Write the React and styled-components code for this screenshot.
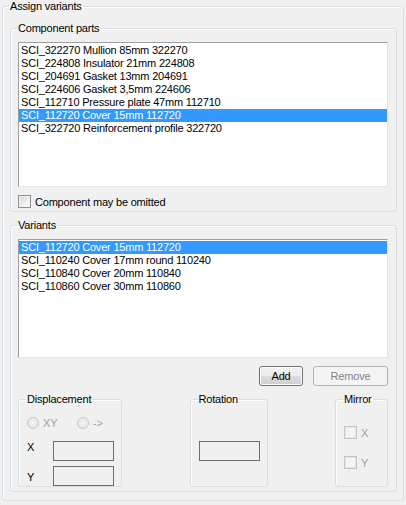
import React from "react";
import styled, { createGlobalStyle } from "styled-components";

const GlobalStyle = createGlobalStyle`
    html, body {
        margin: 0;
        padding: 0;
        background: #f0f0f0;
    }
    body {
        font-family: "Liberation Sans", Arial, sans-serif;
        font-size: 11px;
        letter-spacing: -0.2px;
        color: #000;
    }
`;

const Page = styled.div`
    width: 406px;
    height: 505px;
    background: #f0f0f0;
    padding: 0 2px;
    box-sizing: border-box;
`;

const Group = styled.fieldset`
    margin: 0;
    min-width: 0;
    border: 1px solid #d5dfe5;
    border-radius: 3px;
    box-shadow: inset 1px 1px 0 #fff;
    padding: ${props => props.pad || '7px'};
    box-sizing: border-box;
`;

const Legend = styled.legend`
    padding: 0 1px;
    line-height: 13px;
    font-size: 11px;
    margin-left: -1px;
`;

const Section = styled(Group)`
    margin-top: ${props => props.top || '0'};
`;

const ListBox = styled.div`
    height: ${props => props.h}px;
    background: #fff;
    border: 1px solid;
    border-color: #a0a0a0 #dfe3e8 #e3e9ef #a0a0a0;
    box-sizing: border-box;
    padding-top: 1px;
    overflow: hidden;
`;

const ListItem = styled.div`
    height: 13px;
    line-height: 13px;
    padding-left: 2px;
    white-space: nowrap;
    background: ${props => props.selected ? '#3399ff' : 'transparent'};
    color: ${props => props.selected ? '#fff' : '#000'};
`;

const CheckRow = styled.label`
    display: flex;
    align-items: center;
    gap: 4px;
    height: 13px;
    margin-top: ${props => props.top || '0'};
    color: ${props => props.disabled ? '#a0a0a0' : '#000'};
`;

const CheckBox = styled.span`
    width: 13px;
    height: 13px;
    box-sizing: border-box;
    border: 1px solid ${props => props.disabled ? '#c5c5c5' : '#8e8f8f'};
    background: ${props => props.disabled
        ? '#f4f4f4'
        : 'linear-gradient(135deg, #d8d8d8 0%, #f6f6f6 80%, #fff 100%)'};
    box-shadow: inset 0 0 0 1px ${props => props.disabled ? '#e6e6e6' : '#f4f4f4'};
    flex: none;
`;

const ButtonRow = styled.div`
    display: flex;
    justify-content: flex-end;
    gap: 10px;
    margin-top: 8px;
`;

const Button = styled.button`
    width: ${props => props.w}px;
    height: 20px;
    padding: 0;
    font-family: "Liberation Sans", Arial, sans-serif;
    font-size: 11px;
    letter-spacing: -0.2px;
    border-radius: 3px;
    border: 1px solid ${props => props.disabled ? '#adb2b5' : '#707070'};
    background: ${props => props.disabled
        ? '#f4f4f4'
        : 'linear-gradient(#f2f2f2 0%, #ebebeb 50%, #dddddd 50%, #cfcfcf 100%)'};
    color: ${props => props.disabled ? '#838383' : '#000'};
    box-shadow: ${props => props.disabled ? 'none' : 'inset 0 0 0 1px #fcfcfc'};
`;

const BottomRow = styled.div`
    display: flex;
    justify-content: space-between;
    margin-top: 7px;
`;

const SmallGroup = styled(Group)`
    width: ${props => props.w}px;
    height: 94px;
    padding: 0 7px 0 8px;
    display: flex;
    flex-direction: column;
`;

const RadioRow = styled.div`
    display: flex;
    align-items: center;
    height: 12px;
    margin-top: 11px;
`;

const Radio = styled.span`
    width: 12px;
    height: 12px;
    border-radius: 50%;
    box-sizing: border-box;
    border: 1px solid #c8c8c8;
    background: radial-gradient(circle at 50% 50%, #f6f6f6 0%, #e6e6e6 70%, #dcdcdc 100%);
    flex: none;
`;

const RadioLabel = styled.span`
    color: #a0a0a0;
    margin-left: 4px;
    width: ${props => props.w || 'auto'};
`;

const FieldRow = styled.div`
    display: flex;
    justify-content: space-between;
    align-items: ${props => props.align || 'center'};
    margin-top: ${props => props.top};
`;

const FieldLabel = styled.span`
    line-height: 11px;
    margin-top: ${props => props.offset || '0'};
`;

const TextBox = styled.div`
    width: 61px;
    height: 20px;
    box-sizing: border-box;
    border: 1px solid #6d6d6d;
    background: #f0f0f0;
    margin-top: ${props => props.top || '0'};
`;

const parts = [
    "SCI_322270 Mullion 85mm 322270",
    "SCI_224808 Insulator 21mm 224808",
    "SCI_204691 Gasket 13mm 204691",
    "SCI_224606 Gasket 3,5mm 224606",
    "SCI_112710 Pressure plate 47mm 112710",
    "SCI_112720 Cover 15mm 112720",
    "SCI_322720 Reinforcement profile 322720",
];

const variants = [
    "SCI_112720 Cover 15mm 112720",
    "SCI_110240 Cover 17mm round 110240",
    "SCI_110840 Cover 20mm 110840",
    "SCI_110860 Cover 30mm 110860",
];

export default function App() {
    return (
        <Page>
            <GlobalStyle />
            <Group pad="9px 6px 8px 7px">
                <Legend>Assign variants</Legend>

                <Section pad="7px 8px 3px 7px">
                    <Legend>Component parts</Legend>
                    <ListBox h={145}>
                        {parts.map((p, i) => (
                            <ListItem key={i} selected={i === 5}>{p}</ListItem>
                        ))}
                    </ListBox>
                    <CheckRow top="8px">
                        <CheckBox />
                        Component may be omitted
                    </CheckRow>
                </Section>

                <Section top="7px" pad="7px 8px 4px 7px">
                    <Legend>Variants</Legend>
                    <ListBox h={119}>
                        {variants.map((v, i) => (
                            <ListItem key={i} selected={i === 0}>{v}</ListItem>
                        ))}
                    </ListBox>
                    <ButtonRow>
                        <Button w={44}>Add</Button>
                        <Button w={75} disabled>Remove</Button>
                    </ButtonRow>

                    <BottomRow>
                        <SmallGroup w={104}>
                            <Legend>Displacement</Legend>
                            <RadioRow>
                                <Radio />
                                <RadioLabel w="34px">XY</RadioLabel>
                                <Radio />
                                <RadioLabel>-&gt;</RadioLabel>
                            </RadioRow>
                            <FieldRow top="12px" align="flex-start">
                                <FieldLabel offset="1px">X</FieldLabel>
                                <TextBox />
                            </FieldRow>
                            <FieldRow top="5px" align="center">
                                <FieldLabel offset="2px">Y</FieldLabel>
                                <TextBox />
                            </FieldRow>
                        </SmallGroup>

                        <SmallGroup w={78}>
                            <Legend>Rotation</Legend>
                            <TextBox top="35px" />
                        </SmallGroup>

                        <SmallGroup w={53}>
                            <Legend>Mirror</Legend>
                            <CheckRow top="20px" disabled>
                                <CheckBox disabled />
                                X
                            </CheckRow>
                            <CheckRow top="17px" disabled>
                                <CheckBox disabled />
                                Y
                            </CheckRow>
                        </SmallGroup>
                    </BottomRow>
                </Section>
            </Group>
        </Page>
    );
}
